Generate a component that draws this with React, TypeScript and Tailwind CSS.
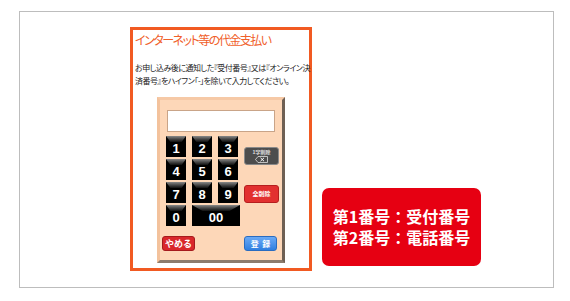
import React from "react";

const jp = { fontFamily: '"Noto Sans CJK JP", "Noto Sans", sans-serif' };
const ar = { fontFamily: '"Liberation Sans", Arial, sans-serif' };

function Key({ label, wide }: { label: string; wide?: boolean }) {
  return (
    <div
      className={`h-[21px] ${wide ? "w-[48px]" : "w-[20px]"} bg-black flex flex-col items-center`}
      style={ar}
    >
      <div className="w-full h-[6px] bg-gradient-to-b from-[#8a8a8a] to-[#111] [clip-path:polygon(0_0,100%_0,78%_100%,22%_100%)]" />
      <div className="text-white font-bold text-[13px] leading-[13px]">{label}</div>
    </div>
  );
}

export default function App() {
  return (
    <div className="w-[570px] h-[301px] bg-white pt-[11px] pl-[19px]">
      <div className="box-border w-[535px] h-[277px] border border-[#bdbdbd] flex items-start pl-[110px] pt-[15px]">
        {/* orange panel */}
        <div className="box-border w-[182px] h-[244px] border-[3px] border-[#f15a22] flex flex-col" style={jp}>
          <div className="pl-[2px] pt-[2px] text-[12px] leading-[16px] text-[#f0602a] tracking-[-1.5px] whitespace-nowrap" style={{ fontFeatureSettings: '"palt"' }}>
            インターネット等の代金支払い
          </div>
          <div
            className="pl-[2px] mt-[13px] text-[8px] leading-[13px] text-[#222] tracking-[-0.5px] whitespace-nowrap"
            style={{ fontFeatureSettings: '"palt"' }}
          >
            お申し込み後に通知した『受付番号』又は『オンライン決
            <br />
            済番号』をハイフン「-」を除いて入力してください。
          </div>
          {/* keypad */}
          <div className="mt-[10px] self-center box-border w-[128px] h-[166px] border-[3px] border-t-[#f6c9a6] border-l-[#f3c29c] border-r-[#6f6054] border-b-[#8c7b6c] bg-[#fdd7b8] flex flex-col pt-[10px] pl-[6px]">
            <div className="box-border ml-[1px] w-[108px] h-[22px] bg-white border border-[#c9a488]" />
            <div className="flex mt-[4px]">
              <div className="grid grid-cols-[20px_20px_20px] gap-x-[6px] gap-y-[2px]">
                {["1", "2", "3", "4", "5", "6", "7", "8", "9"].map((k) => (
                  <Key key={k} label={k} />
                ))}
                <Key label="0" />
                <div className="col-span-2">
                  <Key label="00" wide />
                </div>
              </div>
              <div className="ml-[6px] flex flex-col">
                <div className="mt-[11px] box-border w-[35px] h-[18px] rounded-[3px] bg-[#4d4d4d] border border-[#8a8a8a] flex flex-col items-center justify-center">
                  <div className="text-[5px] leading-[6px] text-[#e0e0e0] font-bold" style={jp}>1字削除</div>
                  <svg width="13" height="7" viewBox="0 0 13 7" className="mt-[1px]">
                    <path d="M3 0.5 H12.5 V6.5 H3 L0.5 3.5 Z" fill="none" stroke="#e0e0e0" strokeWidth="0.8" />
                    <path d="M5.5 1.8 L9 5.2 M9 1.8 L5.5 5.2" stroke="#fff" strokeWidth="1" />
                  </svg>
                </div>
                <div className="mt-[20px] box-border w-[35px] h-[18px] rounded-[3px] bg-[#e2302f] border border-[#b51e1e] flex items-center justify-center">
                  <div className="text-[6px] leading-none text-white font-bold" style={jp}>全削除</div>
                </div>
              </div>
            </div>
            <div className="flex items-center mt-[10px] pr-[5px] justify-between -ml-[4px]">
              <div className="box-border w-[33px] h-[15px] rounded-[3px] bg-[#d9272b] border border-[#a51a1d] flex items-center justify-center text-white font-bold text-[9px] leading-none" style={jp}>
                やめる
              </div>
              <div className="box-border w-[33px] h-[15px] rounded-[3px] bg-gradient-to-b from-[#6aa9f5] to-[#2f7fe0] border border-[#2a6cc0] flex items-center justify-center text-white font-bold text-[8px] leading-none whitespace-pre" style={jp}>
                登  録
              </div>
            </div>
          </div>
        </div>
        {/* red box */}
        <div
          className="ml-[10px] mt-[161px] w-[159px] h-[78px] rounded-[7px] bg-[#e60012] flex flex-col items-center justify-center text-white font-bold text-[16px] leading-[21px]"
          style={jp}
        >
          <div className="leading-[21px]">第1番号：受付番号</div>
          <div className="leading-[21px]">第2番号：電話番号</div>
        </div>
      </div>
    </div>
  );
}
